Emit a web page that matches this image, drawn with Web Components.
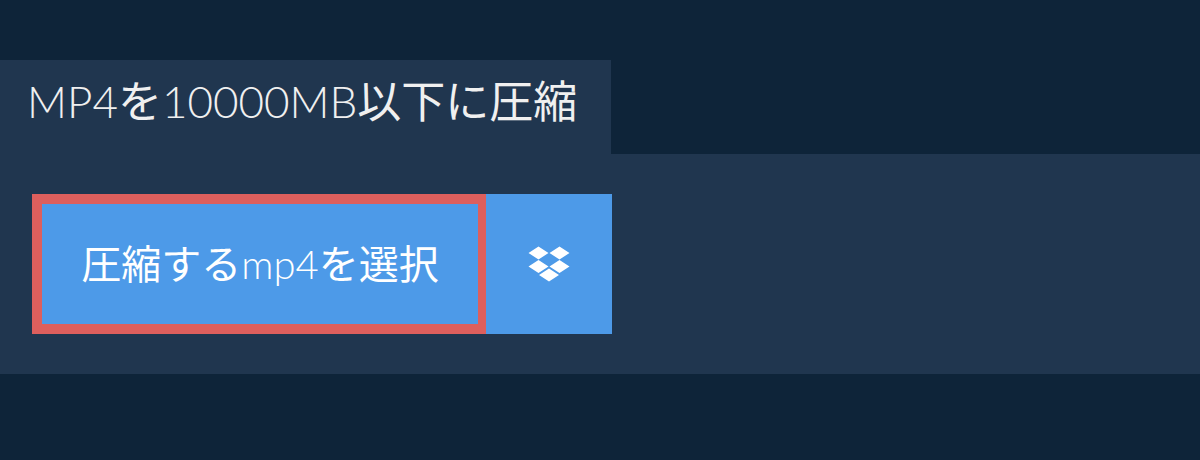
<!DOCTYPE html>
<html lang="ja">
<head>
<meta charset="UTF-8">
<title>MP4を10000MB以下に圧縮</title>
<style>
  html, body { margin: 0; padding: 0; background: #0e2439; }
  body { font-family: Lato, "Noto Sans CJK JP", sans-serif; width: 1200px; height: 460px; overflow: hidden; }
  /* kana and kanji sit one weight above the latin runs */
  .ja { font-weight: 400; }
</style>
</head>
<body>
<template id="tool-card-template">
  <style>
    :host { display: block; padding-top: 60px; }
    .tab {
      display: inline-block;
      box-sizing: border-box;
      width: 611px;
      height: 94px;
      padding: 15px 0 0 27px;
      background: #20364f;
      color: #f0f0f0;
      font: 300 44px/52px Lato, "Noto Sans CJK JP", sans-serif;
      white-space: nowrap;
      vertical-align: top;
    }
    .panel {
      display: flex;
      height: 140px;
      padding: 40px 32px;
      background: #20364f;
    }
  </style>
  <div class="tab"><slot name="title"></slot></div>
  <div class="panel"><slot></slot></div>
</template>

<template id="file-picker-template">
  <style>
    :host { display: flex; height: 140px; }
    .choose {
      box-sizing: border-box;
      width: 454px;
      display: flex;
      align-items: center;
      justify-content: center;
      border: solid #dd5f5d;
      border-width: 10px 8px 10px 10px;
      background: #4d9ae8;
      color: #fff;
      font: 300 40px/1 Lato, "Noto Sans CJK JP", sans-serif;
      white-space: nowrap;
    }
    .dropbox {
      width: 126px;
      display: flex;
      align-items: center;
      justify-content: center;
      background: #4d9ae8;
    }
    svg { display: block; width: 42px; height: 36px; fill: #fff; }
  </style>
  <div class="choose"><span><slot></slot></span></div>
  <div class="dropbox">
    <svg viewBox="0 0 42 36">
      <path d="M10.500 .5 .5 7 10.500 13.500 20.500 7ZM31.500 .5 21.500 7 31.500 13.500 41.500 7ZM10.500 14 .5 20.500 10.500 27 20.500 20.500ZM31.500 14 21.500 20.500 31.500 27 41.500 20.500ZM21 22.500 11 29 21 35.500 31 29Z"/>
    </svg>
  </div>
</template>

<tool-card>
  <span slot="title">MP4<span class="ja">を</span>10000MB<span class="ja">以下に圧縮</span></span>
  <file-picker><span class="ja">圧縮する</span>mp4<span class="ja">を選択</span></file-picker>
</tool-card>

<script>
  class ToolCard extends HTMLElement {
    constructor() {
      super();
      const root = this.attachShadow({ mode: 'open' });
      root.appendChild(document.getElementById('tool-card-template').content.cloneNode(true));
    }
  }
  class FilePicker extends HTMLElement {
    constructor() {
      super();
      const root = this.attachShadow({ mode: 'open' });
      root.appendChild(document.getElementById('file-picker-template').content.cloneNode(true));
    }
  }
  customElements.define('tool-card', ToolCard);
  customElements.define('file-picker', FilePicker);
</script>
</body>
</html>
